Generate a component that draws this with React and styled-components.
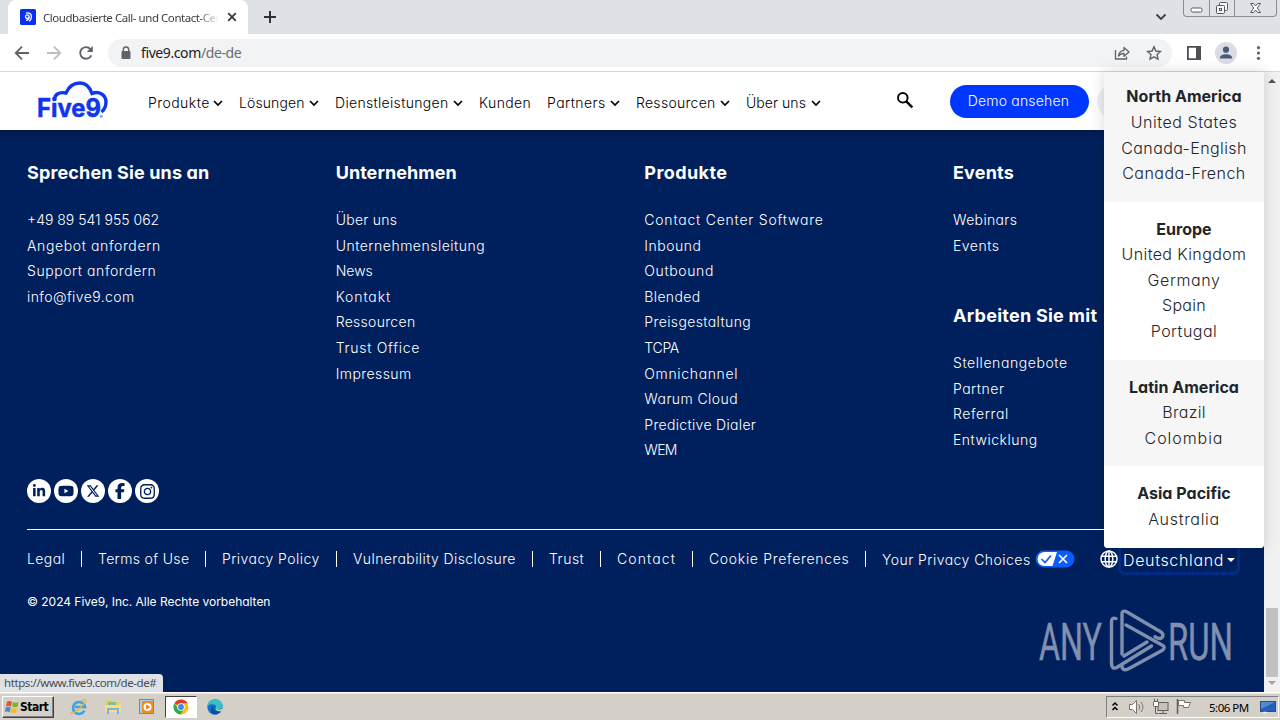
import React from "react";
import styled, { createGlobalStyle } from "styled-components";
import { FaLinkedinIn, FaYoutube, FaXTwitter, FaFacebookF, FaInstagram } from "react-icons/fa6";

const GlobalStyle = createGlobalStyle`
  * {
    box-sizing: border-box;
  }
  body {
    margin: 0;
    overflow: hidden;
    font-family: "Inter", "Liberation Sans", sans-serif;
  }
  h2, h3, ul {
    margin: 0;
    padding: 0;
    list-style: none;
  }
`;

const Screen = styled.div`
  display: flex;
  flex-direction: column;
  width: 1280px;
  height: 720px;
  overflow: hidden;
`;

/* browser */
const TabStrip = styled.div`
  display: flex;
  height: 34px;
  padding-left: 8px;
  background: #dee1e6;
`;
const Tab = styled.div`
  display: flex;
  align-items: center;
  width: 240px;
  padding: 0 10px 0 12px;
  border-radius: 8px 8px 0 0;
  background: #fff;
`;
const Favicon = styled.svg`
  flex: none;
  width: 16px;
  height: 16px;
  margin-right: 7px;
`;
const TabTitle = styled.span`
  width: 176px;
  margin-right: 8px;
  color: #3c4043;
  font: 11.5px "Noto Sans", sans-serif;
  letter-spacing: -0.45px;
  white-space: nowrap;
  mask-image: linear-gradient(90deg, #000 88%, transparent);
`;
const TabSearch = styled.svg`
  width: 12px;
  height: 34px;
  margin: 0 16px 0 auto;
`;
const Caption = styled.div`
  display: flex;
  width: 94px;
  height: 17px;
  margin-right: 3px;
  border: 1px solid #8a8d94;
  border-top: 0;
  border-radius: 0 0 4px 4px;
`;
const CaptionBtn = styled.div`
  display: flex;
  align-items: center;
  justify-content: center;
  width: ${({ $w }) => $w}px;
  & + & {
    border-left: 1px solid #8a8d94;
  }
`;
const Toolbar = styled.div`
  display: flex;
  align-items: center;
  height: 38px;
  padding: 0 12px 0 14px;
  border-bottom: 1px solid #d5d7da;
  background: #fff;
`;
const ToolIcon = styled.svg`
  flex: none;
  width: 16px;
  height: 16px;
  margin-right: ${({ $gap }) => $gap || 0}px;
`;
const AddressBar = styled.div`
  display: flex;
  flex: 1;
  align-items: center;
  height: 28px;
  margin: 0 14px;
  padding: 0 10px;
  border-radius: 14px;
  background: #f1f3f4;
`;
const Url = styled.span`
  flex: 1;
  margin-left: 7px;
  color: #202124;
  font: 14px "Noto Sans", sans-serif;
  letter-spacing: -0.4px;
  span {
    color: #6a6e73;
  }
`;
const Avatar = styled.svg`
  width: 22px;
  height: 22px;
  margin: 0 13px;
`;

/* page */
const Viewport = styled.div`
  position: relative;
  display: flex;
  height: 620px;
`;
const Page = styled.div`
  width: 1264px;
  background: #00205d;
`;
const Scrollbar = styled.div`
  display: flex;
  flex-direction: column;
  align-items: center;
  justify-content: space-between;
  width: 16px;
  padding: 5px 0;
  background: #f1f1f1;
`;
const Thumb = styled.div`
  width: 12px;
  height: 69px;
  margin: auto 0 2px;
  background: #c1c1c1;
`;
const Header = styled.header`
  display: flex;
  align-items: center;
  height: 58px;
  padding-left: 37px;
  background: #fff;
`;
const Logo = styled.svg`
  width: 74px;
  height: 40px;
  margin-right: 37px;
  overflow: visible;
`;
const Nav = styled.nav`
  display: flex;
  padding-top: 4px;
`;
const NavItem = styled.a`
  display: flex;
  align-items: center;
  width: ${({ $w }) => $w}px;
  color: #000;
  font-size: 14px;
  font-weight: 300;
  line-height: 20px;
  letter-spacing: ${({ $track }) => $track}px;
  font-feature-settings: "cv11";
  white-space: nowrap;
  svg {
    margin: 0 16px 0 auto;
  }
`;
const SearchIcon = styled.svg`
  width: 18px;
  height: 18px;
  margin: 0 36px 2px 59px;
`;
const DemoButton = styled.button`
  width: 139px;
  height: 33px;
  margin-top: 1px;
  padding: 0 2px 2px 0;
  border: 0;
  border-radius: 17px;
  background: #0037ff;
  color: #fff;
  font: 300 14px "Inter", sans-serif;
  letter-spacing: 0.2px;
  font-feature-settings: "cv11";
`;
const NextButton = styled.div`
  width: 60px;
  height: 33px;
  margin-left: 8px;
  border-radius: 17px;
  background: #eeeef4;
`;
const FooterTop = styled.div`
  height: 30px;
  background: linear-gradient(#001b4c, #00205d 9px);
`;
const Columns = styled.div`
  display: grid;
  grid-template-columns: repeat(4, 308.67px);
  height: 319px;
  padding-left: 27px;
`;
const Heading = styled.h3`
  margin: ${({ $top }) => $top || 0}px 0 21px;
  color: #fff;
  font-size: 18px;
  font-weight: 700;
  line-height: 26px;
  letter-spacing: ${({ $track }) => $track}px;
  font-feature-settings: "cv11";
  white-space: nowrap;
`;
const FootLink = styled.li`
  color: #fff;
  font-size: 14px;
  font-weight: 300;
  line-height: 25.6px;
  letter-spacing: ${({ $track }) => $track}px;
  font-feature-settings: "cv11";
  white-space: nowrap;
`;
const Socials = styled.div`
  display: flex;
  gap: 3px;
  padding-left: 27px;
`;
const Social = styled.span`
  display: flex;
  align-items: center;
  justify-content: center;
  width: 24px;
  height: 24px;
  border-radius: 50%;
  background: #fff;
  color: #00205d;
`;
const Rule = styled.div`
  height: 1px;
  margin: 26px 27px 21px;
  background: #fff;
`;
const Legal = styled.div`
  display: flex;
  align-items: center;
  height: 16px;
  padding-left: 11px;
`;
const LegalLink = styled.a`
  flex: none;
  width: ${({ $w }) => $w}px;
  padding: ${({ $last }) => ($last ? "2px" : 0)} 0 0 16px;
  border-right: ${({ $last }) => ($last ? 0 : "1px solid #fff")};
  color: #fff;
  font-size: 14px;
  font-weight: 300;
  line-height: 16px;
  letter-spacing: ${({ $track }) => $track}px;
  font-feature-settings: "cv11";
  white-space: nowrap;
`;
const Choices = styled.svg`
  flex: none;
  width: 40px;
  height: 18px;
  margin-right: 25px;
`;
const Globe = styled.svg`
  flex: none;
  width: 18px;
  height: 18px;
`;
const Region = styled.div`
  display: flex;
  flex: none;
  align-items: center;
  width: 122px;
  height: 32px;
  padding: 2px 0 0 5px;
  border-radius: 7px;
  box-shadow: inset 0 0 0 3px #002c86;
  color: #fff;
  font-size: 16px;
  font-weight: 300;
  letter-spacing: 0.65px;
  font-feature-settings: "cv11";
`;
const Caret = styled.span`
  margin-left: 3px;
  border: 4px solid transparent;
  border-top-color: #fff;
  border-bottom: 0;
`;
const Copyright = styled.p`
  margin: 26px 0 0 27px;
  color: #fff;
  font-size: 12px;
  font-weight: 400;
  line-height: 18px;
  letter-spacing: -0.02px;
  font-feature-settings: "cv11";
`;
const RegionMenu = styled.div`
  position: absolute;
  top: 0;
  left: 1104px;
  width: 160px;
  height: 476px;
  overflow: hidden;
  border-radius: 0 0 4px 4px;
  background: #fff;
  box-shadow: 0 0 14px rgba(0, 0, 0, 0.16);
`;
const RegionGroup = styled.ul`
  height: ${({ $h }) => $h}px;
  padding-top: ${({ $top }) => $top}px;
  background: ${({ $grey }) => ($grey ? "#f6f6f6" : "#fff")};
`;
const RegionName = styled.li`
  color: #212529;
  font-size: 16px;
  font-weight: ${({ $bold }) => ($bold ? 700 : 300)};
  line-height: 25.6px;
  letter-spacing: ${({ $track }) => $track}px;
  font-feature-settings: "cv11";
  text-align: center;
  white-space: nowrap;
`;
const Watermark = styled.svg`
  position: absolute;
  top: 536px;
  left: 1036px;
  width: 200px;
  height: 66px;
  overflow: visible;
`;
const StatusBubble = styled.div`
  position: absolute;
  bottom: 0;
  left: 0;
  width: 163px;
  height: 18px;
  padding-left: 4px;
  border-radius: 0 4px 0 0;
  background: #dee1e6;
  color: #4a4d51;
  font: 11.5px/18px "Noto Sans", sans-serif;
  letter-spacing: -0.42px;
  white-space: nowrap;
`;

/* taskbar */
const Taskbar = styled.div`
  display: flex;
  align-items: center;
  height: 28px;
  padding: 1px 0 0 2px;
  border-top: 1px solid #fff;
  background: #d4d0c8;
  box-shadow: inset 0 1px 0 #e9e7e2;
`;
const StartButton = styled.div`
  display: flex;
  align-items: center;
  width: 52px;
  height: 22px;
  margin-right: 9px;
  padding-left: 1px;
  border: 1px solid;
  border-color: #fff #404040 #404040 #fff;
  box-shadow: inset -1px -1px 0 #808080;
  color: #000;
  font: bold 12px "DejaVu Sans Condensed", "DejaVu Sans", sans-serif;
  letter-spacing: -0.5px;
`;
const TaskIcon = styled.div`
  display: flex;
  align-items: center;
  justify-content: center;
  width: 32px;
  height: 22px;
  margin-right: 2px;
  border: 1px solid;
  border-color: ${({ $active }) => ($active ? "#404040 #fff #fff #404040" : "transparent")};
  background: ${({ $active }) => ($active ? "#fff" : "transparent")};
`;
const Tray = styled.div`
  display: flex;
  align-items: center;
  width: 173px;
  height: 22px;
  margin: 0 1px 0 auto;
  padding-left: 4px;
  border: 1px solid;
  border-color: #808080 #fff #fff #808080;
`;
const Clock = styled.span`
  width: 51px;
  margin-left: 15px;
  color: #000;
  font: 11.5px "Noto Sans", sans-serif;
  letter-spacing: -0.5px;
  white-space: nowrap;
`;

const navItems = [
  { label: "Produkte", w: 91, track: 0.45, arrow: true },
  { label: "Lösungen", w: 96, track: 0.1, arrow: true },
  { label: "Dienstleistungen", w: 144, track: 0.32, arrow: true },
  { label: "Kunden", w: 68, track: 0.4 },
  { label: "Partners", w: 89, track: 0.45, arrow: true },
  { label: "Ressourcen", w: 110, track: 0.28, arrow: true },
  { label: "Über uns", w: 91, track: 0.05, arrow: true },
];

const columns = [
  [
    {
      title: "Sprechen Sie uns an",
      track: 0.14,
      links: [
        ["+49 89 541 955 062", 0],
        ["Angebot anfordern", 0.62],
        ["Support anfordern", 0.56],
        ["info@five9.com", 0.4],
      ],
    },
  ],
  [
    {
      title: "Unternehmen",
      track: 0.05,
      links: [
        ["Über uns", 0.25],
        ["Unternehmensleitung", 0.5],
        ["News", 0],
        ["Kontakt", 0.9],
        ["Ressourcen", 0.3],
        ["Trust Office", 0.72],
        ["Impressum", 0.42],
      ],
    },
  ],
  [
    {
      title: "Produkte",
      track: 0.42,
      links: [
        ["Contact Center Software", 0.78],
        ["Inbound", 0.5],
        ["Outbound", 0.62],
        ["Blended", 0.36],
        ["Preisgestaltung", 0.38],
        ["TCPA", -0.3],
        ["Omnichannel", 0.65],
        ["Warum Cloud", 0.42],
        ["Predictive Dialer", 0.32],
        ["WEM", -0.7],
      ],
    },
  ],
  [
    {
      title: "Events",
      track: 0.2,
      links: [
        ["Webinars", 0.35],
        ["Events", 0.5],
      ],
    },
    {
      title: "Arbeiten Sie mit",
      track: 0.26,
      top: 45,
      links: [
        ["Stellenangebote", 0.58],
        ["Partner", 0.5],
        ["Referral", 0.6],
        ["Entwicklung", 0.5],
      ],
    },
  ],
];

const legalLinks = [
  { label: "Legal", w: 71, track: 0.4 },
  { label: "Terms of Use", w: 124, track: 0.35 },
  { label: "Privacy Policy", w: 131, track: 0.45 },
  { label: "Vulnerability Disclosure", w: 196, track: 0.4 },
  { label: "Trust", w: 68, track: 0.5 },
  { label: "Contact", w: 92, track: 1.1 },
  { label: "Cookie Preferences", w: 173, track: 0.68 },
  { label: "Your Privacy Choices", w: 169, track: 0.46 },
];

const regions = [
  {
    name: "North America",
    h: 130,
    top: 12.4,
    grey: true,
    items: [
      ["United States", 0.55],
      ["Canada-English", 0.4],
      ["Canada-French", 0.45],
    ],
  },
  {
    name: "Europe",
    h: 158,
    top: 14.6,
    items: [
      ["United Kingdom", 0.38],
      ["Germany", 0.6],
      ["Spain", 0.3],
      ["Portugal", 0.5],
    ],
  },
  {
    name: "Latin America",
    h: 106,
    top: 14.6,
    grey: true,
    items: [
      ["Brazil", 0.3],
      ["Colombia", 0.95],
    ],
  },
  { name: "Asia Pacific", h: 82, top: 15, items: [["Australia", 0.7]] },
];

const socials = [
  { Icon: FaLinkedinIn, size: 14 },
  { Icon: FaYoutube, size: 16 },
  { Icon: FaXTwitter, size: 14 },
  { Icon: FaFacebookF, size: 16 },
  { Icon: FaInstagram, size: 17 },
];

function Browser() {
  return (
    <>
      <TabStrip>
        <Tab>
          <Favicon viewBox="0 0 16 16">
            <rect width="16" height="16" rx="1.5" fill="#0a2ff2" />
            <g fill="none" stroke="#fff" strokeWidth="1.3">
              <circle cx="7.3" cy="7.7" r="1.8" />
              <path d="M9.1 7.8c0 2-1 3.2-3 3.8M6 4.1c3-1 5.4.6 5.4 3.4 0 2-.8 3.6-2.4 4.7" />
            </g>
          </Favicon>
          <TabTitle>Cloudbasierte Call- und Contact-Cen</TabTitle>
          <svg width="10" height="10" viewBox="0 0 10 10">
            <path d="M1.2 1.2l7.6 7.6M8.8 1.2L1.2 8.8" stroke="#333639" strokeWidth="1.7" />
          </svg>
        </Tab>
        <svg width="44" height="34" viewBox="0 0 44 34">
          <path d="M22 11v12M16 17h12" stroke="#2e3135" strokeWidth="2" />
        </svg>
        <TabSearch viewBox="0 0 12 34">
          <path d="M1.5 14.5L6 19l4.5-4.5" fill="none" stroke="#3c4043" strokeWidth="1.8" />
        </TabSearch>
        <Caption>
          <CaptionBtn $w={25}>
            <svg width="13" height="16" viewBox="0 0 13 16">
              <rect x="1" y="8" width="11" height="4" rx="1.5" fill="#fff" stroke="#555961" />
            </svg>
          </CaptionBtn>
          <CaptionBtn $w={25}>
            <svg width="14" height="16" viewBox="0 0 14 16">
              <g fill="#f4f5f7" stroke="#555961">
                <rect x="4.5" y="2.5" width="8" height="8" rx="1" />
                <rect x="1.5" y="5.5" width="8" height="8" rx="1" />
                <rect x="4.5" y="8.5" width="2" height="2" />
              </g>
            </svg>
          </CaptionBtn>
          <CaptionBtn $w={42}>
            <svg width="13" height="16" viewBox="0 0 13 16">
              <path
                d="M1.5 3.5h3l2 2.5 2-2.5h3L8.3 8l3.2 4.5h-3l-2-2.5-2 2.5h-3L4.7 8z"
                fill="#fff"
                stroke="#555961"
              />
            </svg>
          </CaptionBtn>
        </Caption>
      </TabStrip>
      <Toolbar>
        <ToolIcon viewBox="0 0 16 16" $gap={16}>
          <path d="M15 8H2M8 1.7L1.7 8 8 14.3" fill="none" stroke="#5f6368" strokeWidth="1.8" />
        </ToolIcon>
        <ToolIcon viewBox="0 0 16 16" $gap={16}>
          <path d="M1 8h13M8 1.7L14.3 8 8 14.3" fill="none" stroke="#bcbec1" strokeWidth="1.8" />
        </ToolIcon>
        <ToolIcon viewBox="0 0 16 16">
          <path d="M13.3 10.3A5.8 5.8 0 1 1 12.3 4l1.3 1.6" fill="none" stroke="#5f6368" strokeWidth="1.9" />
          <path d="M14.8 1v6H8.8z" fill="#5f6368" />
        </ToolIcon>
        <AddressBar>
          <ToolIcon viewBox="0 0 16 16">
            <rect x="3.5" y="6" width="9" height="8" rx="1" fill="#5f6368" />
            <path d="M5.3 6V4.7a2.7 2.7 0 0 1 5.4 0V6" fill="none" stroke="#5f6368" strokeWidth="1.4" />
          </ToolIcon>
          <Url>
            five9.com<span>/de-de</span>
          </Url>
          <ToolIcon viewBox="0 0 16 16" $gap={16}>
            <g fill="none" stroke="#5f6368" strokeWidth="1.3">
              <path d="M1.5 5v9h11v-2.5" />
              <path d="M10 5.3V2.5L15 7l-5 4.3V8.5c-2.5 0-4.2.7-5.5 2.5.4-3.3 2.2-5.2 5.5-5.7z" strokeLinejoin="round" />
            </g>
          </ToolIcon>
          <ToolIcon viewBox="0 0 16 16">
            <path
              d="M8 1.8l1.9 4.2 4.6.5-3.4 3.1.9 4.5-4-2.3-4 2.3.9-4.5L1.5 6.5l4.6-.5z"
              fill="none"
              stroke="#5f6368"
              strokeWidth="1.4"
            />
          </ToolIcon>
        </AddressBar>
        <ToolIcon viewBox="0 0 16 16">
          <path d="M1.9 1.9h12.2v12.2H1.9z" fill="none" stroke="#4d5156" strokeWidth="1.8" />
          <path d="M10 1h5v14h-5z" fill="#4d5156" />
        </ToolIcon>
        <Avatar viewBox="0 0 22 22">
          <circle cx="11" cy="11" r="11" fill="#dadde3" />
          <circle cx="11" cy="7.7" r="3.1" fill="#4a5a78" />
          <path d="M4.8 16.5c0-3 3-4.3 6.2-4.3s6.2 1.3 6.2 4.3z" fill="#4a5a78" />
        </Avatar>
        <svg width="18" height="16" viewBox="0 0 18 16">
          <g fill="#5f6368">
            <circle cx="8.5" cy="2.7" r="1.6" />
            <circle cx="8.5" cy="8" r="1.6" />
            <circle cx="8.5" cy="13.3" r="1.6" />
          </g>
        </svg>
      </Toolbar>
    </>
  );
}

function SiteHeader() {
  return (
    <Header>
      <Logo viewBox="0 0 74 40">
        <text
          x="0"
          y="35.8"
          fill="#0f35f0"
          stroke="#0f35f0"
          strokeWidth=".5"
          fontFamily="Inter, sans-serif"
          fontSize="25.5"
          fontWeight="700"
          textLength="64"
          lengthAdjust="spacingAndGlyphs"
        >
          Five9
        </text>
        <path
          d="M17.5 20C17 13.5 22 10.5 29 12 32 5 37 2 43 2s9.5 3.5 12 10.500C62 9.500 69 14 69 21c0 4-1.500 7.500-4.500 10"
          fill="none"
          stroke="#0f35f0"
          strokeWidth="3.4"
        />
        <circle cx="64.3" cy="35.3" r="1.5" fill="#8f9ff5" />
      </Logo>
      <Nav>
        {navItems.map((item) => (
          <NavItem key={item.label} $w={item.w} $track={item.track}>
            {item.label}
            {item.arrow && (
              <svg width="10" height="7" viewBox="0 0 10 7">
                <path d="M1 1l4 4 4-4" fill="none" stroke="#000" strokeWidth="1.7" />
              </svg>
            )}
          </NavItem>
        ))}
      </Nav>
      <SearchIcon viewBox="0 0 18 18">
        <circle cx="6.8" cy="6.8" r="4.8" fill="none" stroke="#000" strokeWidth="1.9" />
        <path d="M10.3 10.3l6 6" stroke="#000" strokeWidth="2.4" />
      </SearchIcon>
      <DemoButton>Demo ansehen</DemoButton>
      <NextButton />
    </Header>
  );
}

function Footer() {
  return (
    <footer>
      <FooterTop />
      <Columns>
        {columns.map((groups) => (
          <div key={groups[0].title}>
            {groups.map((group) => (
              <React.Fragment key={group.title}>
                <Heading $track={group.track} $top={group.top}>
                  {group.title}
                </Heading>
                <ul>
                  {group.links.map(([link, track]) => (
                    <FootLink key={link} $track={track}>
                      {link}
                    </FootLink>
                  ))}
                </ul>
              </React.Fragment>
            ))}
          </div>
        ))}
      </Columns>
      <Socials>
        {socials.map(({ Icon, size }, i) => (
          <Social key={i}>
            <Icon size={size} />
          </Social>
        ))}
      </Socials>
      <Rule />
      <Legal>
        {legalLinks.map((link, i) => (
          <LegalLink key={link.label} $w={link.w} $track={link.track} $last={i === legalLinks.length - 1}>
            {link.label}
          </LegalLink>
        ))}
        <Choices viewBox="0 0 40 18">
          <rect x=".5" y=".5" width="39" height="17" rx="8.5" fill="#0a5cff" />
          <path d="M9.5 2H22l-4.5 14h-8a7 7 0 0 1 0-14z" fill="#fff" />
          <path d="M6.5 9l3.5 3.5 6-7" fill="none" stroke="#0a5cff" strokeWidth="1.7" />
          <path d="M24 5l8 8M32 5l-8 8" stroke="#fff" strokeWidth="1.7" />
        </Choices>
        <Globe viewBox="0 0 18 18">
          <g fill="none" stroke="#fff" strokeWidth="1.5">
            <circle cx="9" cy="9" r="8" />
            <ellipse cx="9" cy="9" rx="3.8" ry="8" />
            <path d="M1.5 6.2h15M1.5 11.8h15M9 1v16" />
          </g>
        </Globe>
        <Region>
          Deutschland
          <Caret />
        </Region>
      </Legal>
      <Copyright>© 2024 Five9, Inc. Alle Rechte vorbehalten</Copyright>
    </footer>
  );
}

function AnyRun() {
  return (
    <Watermark viewBox="0 0 200 66">
      <g fill="#8090ae" stroke="#8090ae" strokeWidth=".5" fontFamily="Roboto, sans-serif" fontSize="52">
        <text x="3" y="51.5" textLength="63" lengthAdjust="spacingAndGlyphs">
          ANY
        </text>
        <text x="132" y="51.5" textLength="65" lengthAdjust="spacingAndGlyphs">
          RUN
        </text>
      </g>
      <g fill="none" stroke="#7f8fae" strokeWidth="3.4" strokeLinejoin="round" strokeLinecap="round">
        <path d="M80 10.5c-3-1-4.5.5-4.5 3v41c0 5 2 7 6 4.5l34-21" />
        <path d="M86 46V6c0-3 2-3.500 5-2l34 20c3 2 2.500 6-1 6.500-2 0-3-.5-5-1.800" />
        <path d="M90 17l36 20c3 1.500 3 3.500 0 5.500L94 60c-5 3-8 2-8-2" />
        <path d="M88 48l23-14" />
      </g>
    </Watermark>
  );
}

function WindowsTaskbar() {
  return (
    <Taskbar>
      <StartButton>
        <svg width="16" height="16" viewBox="0 0 16 16">
          <path d="M3 2.5c2-1 3.5-.7 5 .2L7 7.5c-1.500-.8-3-.8-5-.1z" fill="#e8552d" />
          <path d="M9 3c2 1 3.700.8 5.500 0l-1 4.800c-2 .8-3.500.7-5.500-.2z" fill="#7db52f" />
          <path d="M1.8 8.500c2-.8 3.300-.6 5 .1l-1 4.600c-1.700-.8-3-.8-5-.2z" fill="#4288d8" />
          <path d="M7.700 9c2 .8 3.500.9 5.500.2l-1 4.400c-2 .8-3.500.6-5.500-.2z" fill="#f5bc25" />
        </svg>
        Start
      </StartButton>
      <TaskIcon>
        <svg width="18" height="18" viewBox="0 0 18 18">
          <path d="M14.5 12.500A6 6 0 1 1 15 9H5" fill="none" stroke="#3aa3e3" strokeWidth="2.5" />
          <path d="M1.500 14.500C-1 18 8 13 13 7c4-5 3.500-7-2-4" fill="none" stroke="#e9b92d" strokeWidth="1.3" />
        </svg>
      </TaskIcon>
      <TaskIcon>
        <svg width="18" height="18" viewBox="0 0 18 18">
          <path d="M2 2h5l1 2h7v9H2z" fill="#eccb62" />
          <path d="M4 4h8v4H4z" fill="#7fc28a" />
          <path d="M1 7h16v7H1z" fill="#f6de8d" />
          <path d="M4 16v-5h10v5" fill="none" stroke="#79b3e0" strokeWidth="2" />
        </svg>
      </TaskIcon>
      <TaskIcon>
        <svg width="18" height="18" viewBox="0 0 18 18">
          <rect x="1.5" y="1.5" width="14" height="14" fill="#a9cdeb" stroke="#5b91bd" />
          <rect x="4" y="3" width="11" height="12" rx="1" fill="#f38b1b" />
          <circle cx="9.5" cy="9" r="4" fill="#fff" />
          <path d="M8.2 6.500l4 2.500-4 2.500z" fill="#ed7311" />
        </svg>
      </TaskIcon>
      <TaskIcon $active>
        <svg width="16" height="16" viewBox="0 0 16 16">
          <circle cx="8" cy="8" r="7.5" fill="#fbc116" />
          <path d="M8 8L1.500 4.300A7.500 7.500 0 0 1 14.500 4.300H8z" fill="#e33b2e" />
          <path d="M1.500 4.300A7.500 7.500 0 0 0 7.500 15.500L11 9.700 5 9.700z" fill="#2da94f" />
          <circle cx="8" cy="8" r="3.7" fill="#fff" />
          <circle cx="8" cy="8" r="2.9" fill="#4285f4" />
        </svg>
      </TaskIcon>
      <TaskIcon>
        <svg width="16" height="16" viewBox="0 0 16 16">
          <circle cx="8" cy="8" r="7.7" fill="#1272c7" />
          <path d="M.5 7C1 2.500 4.500.3 8 .3c4.500 0 7.700 3.200 7.700 6.200 0 2.500-2 4-4.500 4-1.700 0-2.400-.8-1.800-1.600C10.500 6 5 3.500.5 7z" fill="#35c1c5" />
          <path d="M6.500 6.500c-1.500 4 2 7 7 5.500-1.700 2.800-5 4-8 3-2-2-2.500-6 1-8.500z" fill="#0d4f9f" />
          <path d="M9.600 7.500c.3 1-.9 2 .2 2.700 2 1 4.700.3 6.200-.7v3l-3.500-.3c-3 .3-5-2.700-2.900-4.700z" fill="#d4d0c8" />
        </svg>
      </TaskIcon>
      <Tray>
        <svg width="10" height="14" viewBox="0 0 10 14">
          <path d="M1.5 5.500l2.500-2.500 2.500 2.500M1.500 10l2.500-2.500 2.500 2.500" fill="none" stroke="#000" strokeWidth="1.5" />
        </svg>
        <svg width="25" height="18" viewBox="0 0 25 18">
          <path d="M8.500 6.500h3l4-4v13l-4-4h-3z" fill="#fff" stroke="#77736b" />
          <path d="M17.500 6c1.500 2 1.500 4 0 6M20 4c2.500 3 2.500 7 0 10" fill="none" stroke="#77736b" />
        </svg>
        <svg width="24" height="18" viewBox="0 0 24 18">
          <rect x="12" y="4.500" width="10" height="8" fill="#c5c2bb" stroke="#625f59" />
          <path d="M13 15.500h8M17 13v2M9.500 9v6.500h3" fill="none" stroke="#625f59" />
          <rect x="7.500" y="3.500" width="5" height="5" rx="1" fill="#fff" stroke="#625f59" />
          <path d="M8.500 1v3M11.500 1v3" stroke="#625f59" />
        </svg>
        <svg width="24" height="18" viewBox="0 0 24 18">
          <path d="M7.500 1v15" stroke="#625f59" strokeWidth="1.5" />
          <path d="M8.500 2.500h6v2h6l-2 5h-5v-2h-5z" fill="#fff" stroke="#77736b" />
        </svg>
        <Clock>5:06 PM</Clock>
        <svg width="16" height="14" viewBox="0 0 16 14">
          <rect x=".5" y="1.5" width="15" height="10" fill="#2460b8" stroke="#2e4f7d" />
          <path d="M1 2h14L1 9z" fill="#4f8cd8" />
          <path d="M3 12.500h4" stroke="#e8f2ff" strokeWidth="1.5" />
        </svg>
      </Tray>
    </Taskbar>
  );
}

export default function App() {
  return (
    <Screen>
      <GlobalStyle />
      <Browser />
      <Viewport>
        <Page>
          <SiteHeader />
          <Footer />
        </Page>
        <Scrollbar>
          <svg width="8" height="8" viewBox="0 0 8 8">
            <path d="M0 6l4-4 4 4z" fill="#505050" />
          </svg>
          <Thumb />
          <svg width="8" height="8" viewBox="0 0 8 8">
            <path d="M0 2l4 4 4-4z" fill="#a3a3a3" />
          </svg>
        </Scrollbar>
        <RegionMenu>
          {regions.map((region) => (
            <RegionGroup key={region.name} $h={region.h} $top={region.top} $grey={region.grey}>
              <RegionName $bold $track={0.02}>
                {region.name}
              </RegionName>
              {region.items.map(([item, track]) => (
                <RegionName key={item} $track={track}>
                  {item}
                </RegionName>
              ))}
            </RegionGroup>
          ))}
        </RegionMenu>
        <AnyRun />
        <StatusBubble>https://www.five9.com/de-de#</StatusBubble>
      </Viewport>
      <WindowsTaskbar />
    </Screen>
  );
}
